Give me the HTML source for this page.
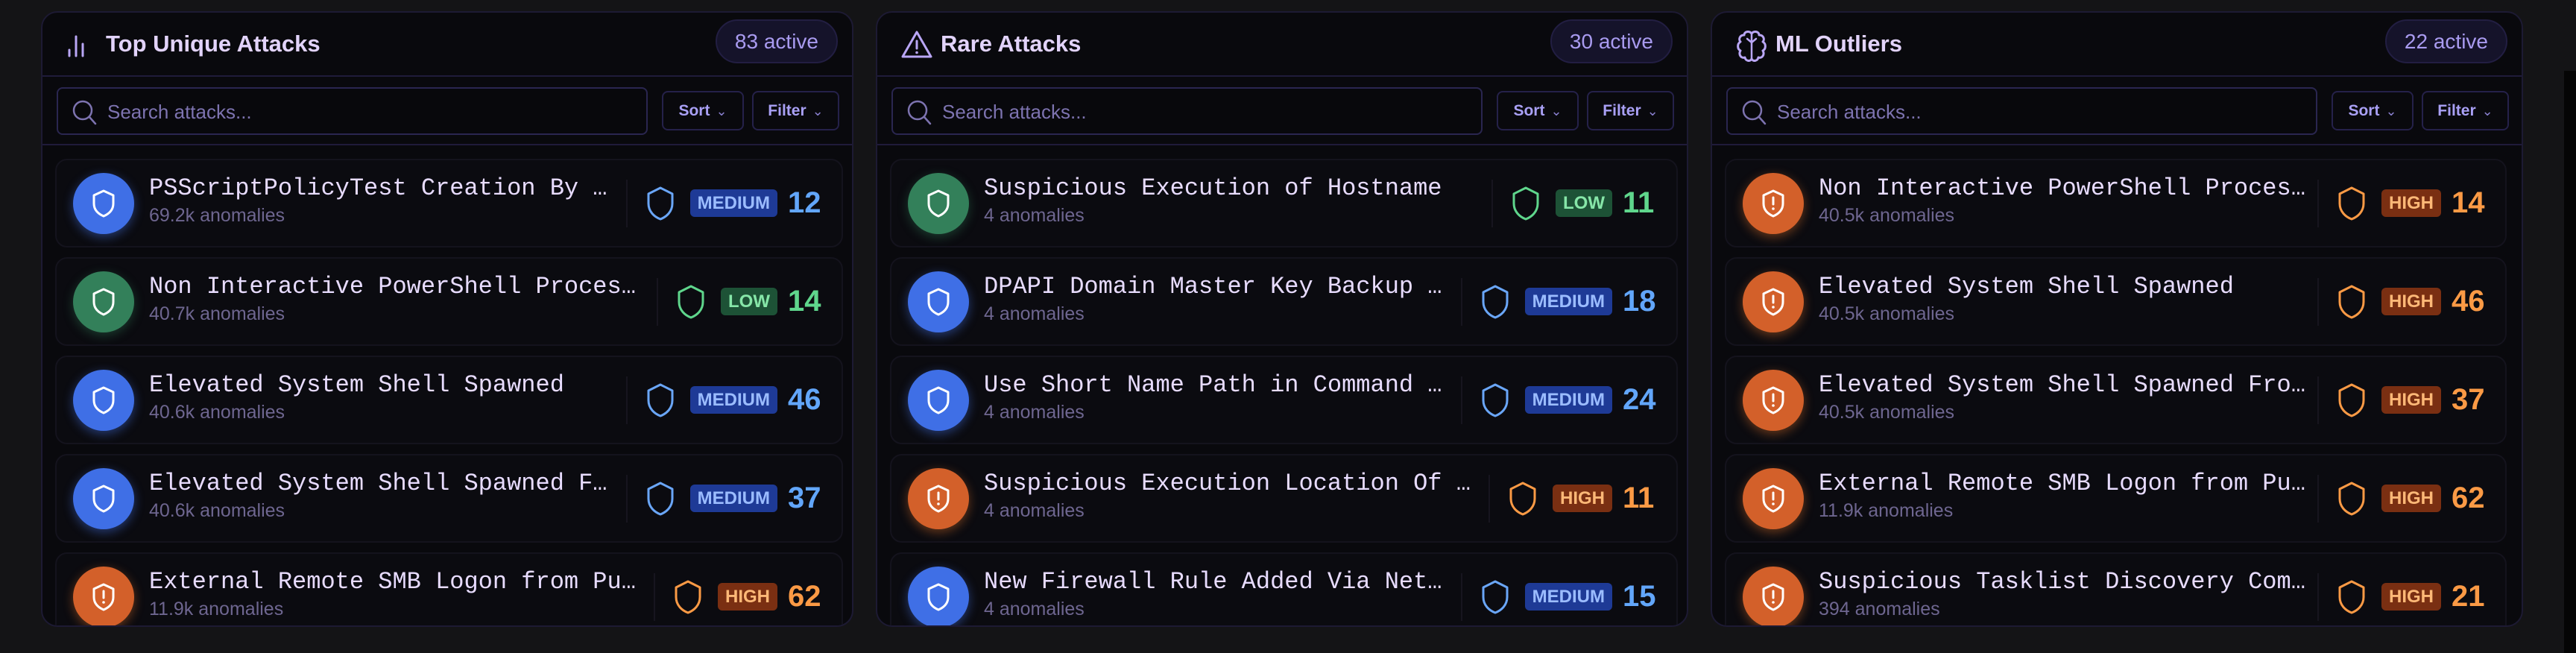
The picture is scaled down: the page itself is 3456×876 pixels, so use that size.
<!DOCTYPE html>
<html><head><meta charset="utf-8"><style>
*{box-sizing:border-box;margin:0;padding:0}
body{width:3456px;height:876px;background:#141416;overflow:hidden;position:relative;font-family:"Liberation Sans",sans-serif}
.sb{position:absolute;left:3440px;top:95px;width:16px;height:781px;background:#050505}
.panel{position:absolute;top:15px;width:1090px;height:826px;background:#09090d;border:2px solid #1d1a33;border-radius:22px;overflow:hidden}
.hdr{position:absolute;left:0;right:0;top:0;height:86px;border-bottom:2px solid #1f1b3a}
.hdr svg{position:absolute;left:30px;top:22px}
.hdr .t{position:absolute;left:85px;top:22px;font-size:31px;font-weight:bold;color:#e2d3fb;line-height:40px}
.act{position:absolute;right:19px;top:9px;height:59px;padding:0 24px;border-radius:30px;background:#15132a;border:2px solid #221e42;color:#a99bf0;font-size:28px;line-height:55px}
.srow{position:absolute;left:0;right:0;top:86px;height:92px;border-bottom:2px solid #1f1b3a}
.search{position:absolute;left:19px;top:14px;width:793px;height:64px;border:2px solid #2a2650;border-radius:8px;background:#08080c}
.search svg{position:absolute;left:18px;top:14px}
.search span{position:absolute;left:66px;top:14px;font-size:26px;color:#7d73b0;line-height:34px}
.btn{position:absolute;top:19px;height:53px;border:2px solid #25214a;border-radius:8px;color:#a9a0f5;font-size:21px;font-weight:bold;line-height:49px;text-align:center}
.btn i{font-style:normal;font-weight:normal;color:#8a80d0;font-size:18px;margin-left:8px}
.rows{position:absolute;left:17px;right:12px;top:196px}
.row{position:relative;height:119px;margin-bottom:13px;border:2px solid #14131d;border-radius:16px;background:#0b0b10;display:flex;align-items:center;padding-left:22px;padding-right:22px}
.c{width:82px;height:82px;border-radius:50%;flex:none;display:flex;align-items:center;justify-content:center}
.blue{background:#3f6fe6;box-shadow:0 4px 14px rgba(70,120,240,.45)}
.green{background:#33805a;box-shadow:0 4px 14px rgba(50,130,90,.4)}
.orange{background:#d3602a;box-shadow:0 4px 14px rgba(220,110,40,.45)}
.txt{flex:1;min-width:0;margin-left:20px;margin-right:16px}
.nm{font-family:"Liberation Mono",monospace;font-size:32px;color:#e8dcff;white-space:nowrap;overflow:hidden;text-overflow:ellipsis;line-height:38px;margin-top:-8px}
.an{font-size:25px;color:#6e6690;line-height:30px;margin-top:2px}
.rt{display:flex;align-items:center;flex:none;height:64px;border-left:2px solid #17151f;padding-left:24px}
.bd{height:37px;padding:0 10px;border-radius:6px;font-size:24px;font-weight:bold;line-height:37px;margin-left:20px}
.bd.m{background:#1e3a96;color:#9bbcff}
.bd.l{background:#1d5236;color:#86e6a8}
.bd.h{background:#7a2f12;color:#fdb877}
.n{font-size:40px;font-weight:bold;margin-left:14px;width:50px}
.n.m{color:#62a6fa}.n.l{color:#5fd68c}.n.h{color:#fb9a45}
</style></head><body>
<div class="sb"></div>

<!-- Panel 1 -->
<div class="panel" style="left:55px">
 <div class="hdr">
  <svg width="40" height="40" viewBox="0 0 40 40"><g stroke="#b9a6f5" stroke-width="3" stroke-linecap="round"><line x1="6" y1="36" x2="6" y2="28"/><line x1="15" y1="36" x2="15" y2="10"/><line x1="24" y1="36" x2="24" y2="20"/></g></svg>
  <div class="t">Top Unique Attacks</div>
  <div class="act">83 active</div>
 </div>
 <div class="srow">
  <div class="search"><svg width="36" height="36" viewBox="0 0 36 36"><circle cx="15" cy="15" r="12" fill="none" stroke="#7d73b0" stroke-width="2.5"/><line x1="24" y1="24" x2="32" y2="33" stroke="#7d73b0" stroke-width="2.5" stroke-linecap="round"/></svg><span>Search attacks...</span></div>
  <div class="btn" style="left:831px;width:110px">Sort<i>⌄</i></div>
  <div class="btn" style="left:952px;width:117px">Filter<i>⌄</i></div>
 </div>
 <div class="rows">
  <div class="row"><div class="c blue"><svg width="34" height="40" viewBox="0 0 34 40"><path d="M17 3 L30 9 V20 C30 29 24 34 17 37 C10 34 4 29 4 20 V9 Z" fill="none" stroke="#fff" stroke-width="3" stroke-linejoin="round"/></svg></div><div class="txt"><div class="nm">PSScriptPolicyTest Creation By PowerShell</div><div class="an">69.2k anomalies</div></div><div class="rt"><svg width="40" height="48" viewBox="0 0 40 48"><path d="M20 3 L36 11 V24 C36 35 28 42 20 45 C12 42 4 35 4 24 V11 Z" fill="none" stroke="#6aa6f8" stroke-width="3" stroke-linejoin="round"/></svg><div class="bd m">MEDIUM</div><div class="n m">12</div></div></div>
  <div class="row"><div class="c green"><svg width="34" height="40" viewBox="0 0 34 40"><path d="M17 3 L30 9 V20 C30 29 24 34 17 37 C10 34 4 29 4 20 V9 Z" fill="none" stroke="#fff" stroke-width="3" stroke-linejoin="round"/></svg></div><div class="txt"><div class="nm">Non Interactive PowerShell Process Spawned</div><div class="an">40.7k anomalies</div></div><div class="rt"><svg width="40" height="48" viewBox="0 0 40 48"><path d="M20 3 L36 11 V24 C36 35 28 42 20 45 C12 42 4 35 4 24 V11 Z" fill="none" stroke="#5fd68c" stroke-width="3" stroke-linejoin="round"/></svg><div class="bd l">LOW</div><div class="n l">14</div></div></div>
  <div class="row"><div class="c blue"><svg width="34" height="40" viewBox="0 0 34 40"><path d="M17 3 L30 9 V20 C30 29 24 34 17 37 C10 34 4 29 4 20 V9 Z" fill="none" stroke="#fff" stroke-width="3" stroke-linejoin="round"/></svg></div><div class="txt"><div class="nm">Elevated System Shell Spawned</div><div class="an">40.6k anomalies</div></div><div class="rt"><svg width="40" height="48" viewBox="0 0 40 48"><path d="M20 3 L36 11 V24 C36 35 28 42 20 45 C12 42 4 35 4 24 V11 Z" fill="none" stroke="#6aa6f8" stroke-width="3" stroke-linejoin="round"/></svg><div class="bd m">MEDIUM</div><div class="n m">46</div></div></div>
  <div class="row"><div class="c blue"><svg width="34" height="40" viewBox="0 0 34 40"><path d="M17 3 L30 9 V20 C30 29 24 34 17 37 C10 34 4 29 4 20 V9 Z" fill="none" stroke="#fff" stroke-width="3" stroke-linejoin="round"/></svg></div><div class="txt"><div class="nm">Elevated System Shell Spawned From Uncommon Parent</div><div class="an">40.6k anomalies</div></div><div class="rt"><svg width="40" height="48" viewBox="0 0 40 48"><path d="M20 3 L36 11 V24 C36 35 28 42 20 45 C12 42 4 35 4 24 V11 Z" fill="none" stroke="#6aa6f8" stroke-width="3" stroke-linejoin="round"/></svg><div class="bd m">MEDIUM</div><div class="n m">37</div></div></div>
  <div class="row"><div class="c orange"><svg width="34" height="40" viewBox="0 0 34 40"><path d="M17 3 L30 9 V20 C30 29 24 34 17 37 C10 34 4 29 4 20 V9 Z" fill="none" stroke="#fff" stroke-width="3" stroke-linejoin="round"/><line x1="17" y1="12" x2="17" y2="21" stroke="#fff" stroke-width="3" stroke-linecap="round"/><circle cx="17" cy="27" r="1.8" fill="#fff"/></svg></div><div class="txt"><div class="nm">External Remote SMB Logon from Public IP</div><div class="an">11.9k anomalies</div></div><div class="rt"><svg width="40" height="48" viewBox="0 0 40 48"><path d="M20 3 L36 11 V24 C36 35 28 42 20 45 C12 42 4 35 4 24 V11 Z" fill="none" stroke="#fb9a45" stroke-width="3" stroke-linejoin="round"/></svg><div class="bd h">HIGH</div><div class="n h">62</div></div></div>
 </div>
</div>

<!-- Panel 2 -->
<div class="panel" style="left:1175px">
 <div class="hdr">
  <svg width="46" height="42" viewBox="0 0 46 42"><path d="M23 4 L42 37 H4 Z" fill="none" stroke="#b9a6f5" stroke-width="3" stroke-linejoin="round"/><line x1="23" y1="16" x2="23" y2="26" stroke="#b9a6f5" stroke-width="3" stroke-linecap="round"/><circle cx="23" cy="31.5" r="1.8" fill="#b9a6f5"/></svg>
  <div class="t">Rare Attacks</div>
  <div class="act">30 active</div>
 </div>
 <div class="srow">
  <div class="search"><svg width="36" height="36" viewBox="0 0 36 36"><circle cx="15" cy="15" r="12" fill="none" stroke="#7d73b0" stroke-width="2.5"/><line x1="24" y1="24" x2="32" y2="33" stroke="#7d73b0" stroke-width="2.5" stroke-linecap="round"/></svg><span>Search attacks...</span></div>
  <div class="btn" style="left:831px;width:110px">Sort<i>⌄</i></div>
  <div class="btn" style="left:952px;width:117px">Filter<i>⌄</i></div>
 </div>
 <div class="rows">
  <div class="row"><div class="c green"><svg width="34" height="40" viewBox="0 0 34 40"><path d="M17 3 L30 9 V20 C30 29 24 34 17 37 C10 34 4 29 4 20 V9 Z" fill="none" stroke="#fff" stroke-width="3" stroke-linejoin="round"/></svg></div><div class="txt"><div class="nm">Suspicious Execution of Hostname</div><div class="an">4 anomalies</div></div><div class="rt"><svg width="40" height="48" viewBox="0 0 40 48"><path d="M20 3 L36 11 V24 C36 35 28 42 20 45 C12 42 4 35 4 24 V11 Z" fill="none" stroke="#5fd68c" stroke-width="3" stroke-linejoin="round"/></svg><div class="bd l">LOW</div><div class="n l">11</div></div></div>
  <div class="row"><div class="c blue"><svg width="34" height="40" viewBox="0 0 34 40"><path d="M17 3 L30 9 V20 C30 29 24 34 17 37 C10 34 4 29 4 20 V9 Z" fill="none" stroke="#fff" stroke-width="3" stroke-linejoin="round"/></svg></div><div class="txt"><div class="nm">DPAPI Domain Master Key Backup Attempt</div><div class="an">4 anomalies</div></div><div class="rt"><svg width="40" height="48" viewBox="0 0 40 48"><path d="M20 3 L36 11 V24 C36 35 28 42 20 45 C12 42 4 35 4 24 V11 Z" fill="none" stroke="#6aa6f8" stroke-width="3" stroke-linejoin="round"/></svg><div class="bd m">MEDIUM</div><div class="n m">18</div></div></div>
  <div class="row"><div class="c blue"><svg width="34" height="40" viewBox="0 0 34 40"><path d="M17 3 L30 9 V20 C30 29 24 34 17 37 C10 34 4 29 4 20 V9 Z" fill="none" stroke="#fff" stroke-width="3" stroke-linejoin="round"/></svg></div><div class="txt"><div class="nm">Use Short Name Path in Command Line</div><div class="an">4 anomalies</div></div><div class="rt"><svg width="40" height="48" viewBox="0 0 40 48"><path d="M20 3 L36 11 V24 C36 35 28 42 20 45 C12 42 4 35 4 24 V11 Z" fill="none" stroke="#6aa6f8" stroke-width="3" stroke-linejoin="round"/></svg><div class="bd m">MEDIUM</div><div class="n m">24</div></div></div>
  <div class="row"><div class="c orange"><svg width="34" height="40" viewBox="0 0 34 40"><path d="M17 3 L30 9 V20 C30 29 24 34 17 37 C10 34 4 29 4 20 V9 Z" fill="none" stroke="#fff" stroke-width="3" stroke-linejoin="round"/><line x1="17" y1="12" x2="17" y2="21" stroke="#fff" stroke-width="3" stroke-linecap="round"/><circle cx="17" cy="27" r="1.8" fill="#fff"/></svg></div><div class="txt"><div class="nm">Suspicious Execution Location Of Wermgr</div><div class="an">4 anomalies</div></div><div class="rt"><svg width="40" height="48" viewBox="0 0 40 48"><path d="M20 3 L36 11 V24 C36 35 28 42 20 45 C12 42 4 35 4 24 V11 Z" fill="none" stroke="#fb9a45" stroke-width="3" stroke-linejoin="round"/></svg><div class="bd h">HIGH</div><div class="n h">11</div></div></div>
  <div class="row"><div class="c blue"><svg width="34" height="40" viewBox="0 0 34 40"><path d="M17 3 L30 9 V20 C30 29 24 34 17 37 C10 34 4 29 4 20 V9 Z" fill="none" stroke="#fff" stroke-width="3" stroke-linejoin="round"/></svg></div><div class="txt"><div class="nm">New Firewall Rule Added Via Netsh</div><div class="an">4 anomalies</div></div><div class="rt"><svg width="40" height="48" viewBox="0 0 40 48"><path d="M20 3 L36 11 V24 C36 35 28 42 20 45 C12 42 4 35 4 24 V11 Z" fill="none" stroke="#6aa6f8" stroke-width="3" stroke-linejoin="round"/></svg><div class="bd m">MEDIUM</div><div class="n m">15</div></div></div>
 </div>
</div>

<!-- Panel 3 -->
<div class="panel" style="left:2295px">
 <div class="hdr">
  <svg width="46" height="46" viewBox="0 0 46 46"><path d="M23 6 C20 2 13 3 13 8 C7 8 5 14 8 17 C3 20 4 27 8 29 C5 34 9 40 14 38 C15 43 21 44 23 40 C25 44 31 43 32 38 C37 40 41 34 38 29 C42 27 43 20 38 17 C41 14 39 8 33 8 C33 3 26 2 23 6 Z" fill="none" stroke="#b9a6f5" stroke-width="3" stroke-linejoin="round"/><path d="M23 6 V40 M23 18 L17 13 M23 18 L29 13" fill="none" stroke="#b9a6f5" stroke-width="2.5" stroke-linecap="round"/></svg>
  <div class="t">ML Outliers</div>
  <div class="act">22 active</div>
 </div>
 <div class="srow">
  <div class="search"><svg width="36" height="36" viewBox="0 0 36 36"><circle cx="15" cy="15" r="12" fill="none" stroke="#7d73b0" stroke-width="2.5"/><line x1="24" y1="24" x2="32" y2="33" stroke="#7d73b0" stroke-width="2.5" stroke-linecap="round"/></svg><span>Search attacks...</span></div>
  <div class="btn" style="left:831px;width:110px">Sort<i>⌄</i></div>
  <div class="btn" style="left:952px;width:117px">Filter<i>⌄</i></div>
 </div>
 <div class="rows" style="right:20px">
  <div class="row"><div class="c orange"><svg width="34" height="40" viewBox="0 0 34 40"><path d="M17 3 L30 9 V20 C30 29 24 34 17 37 C10 34 4 29 4 20 V9 Z" fill="none" stroke="#fff" stroke-width="3" stroke-linejoin="round"/><line x1="17" y1="12" x2="17" y2="21" stroke="#fff" stroke-width="3" stroke-linecap="round"/><circle cx="17" cy="27" r="1.8" fill="#fff"/></svg></div><div class="txt"><div class="nm">Non Interactive PowerShell Process Spawned</div><div class="an">40.5k anomalies</div></div><div class="rt"><svg width="40" height="48" viewBox="0 0 40 48"><path d="M20 3 L36 11 V24 C36 35 28 42 20 45 C12 42 4 35 4 24 V11 Z" fill="none" stroke="#fb9a45" stroke-width="3" stroke-linejoin="round"/></svg><div class="bd h">HIGH</div><div class="n h">14</div></div></div>
  <div class="row"><div class="c orange"><svg width="34" height="40" viewBox="0 0 34 40"><path d="M17 3 L30 9 V20 C30 29 24 34 17 37 C10 34 4 29 4 20 V9 Z" fill="none" stroke="#fff" stroke-width="3" stroke-linejoin="round"/><line x1="17" y1="12" x2="17" y2="21" stroke="#fff" stroke-width="3" stroke-linecap="round"/><circle cx="17" cy="27" r="1.8" fill="#fff"/></svg></div><div class="txt"><div class="nm">Elevated System Shell Spawned</div><div class="an">40.5k anomalies</div></div><div class="rt"><svg width="40" height="48" viewBox="0 0 40 48"><path d="M20 3 L36 11 V24 C36 35 28 42 20 45 C12 42 4 35 4 24 V11 Z" fill="none" stroke="#fb9a45" stroke-width="3" stroke-linejoin="round"/></svg><div class="bd h">HIGH</div><div class="n h">46</div></div></div>
  <div class="row"><div class="c orange"><svg width="34" height="40" viewBox="0 0 34 40"><path d="M17 3 L30 9 V20 C30 29 24 34 17 37 C10 34 4 29 4 20 V9 Z" fill="none" stroke="#fff" stroke-width="3" stroke-linejoin="round"/><line x1="17" y1="12" x2="17" y2="21" stroke="#fff" stroke-width="3" stroke-linecap="round"/><circle cx="17" cy="27" r="1.8" fill="#fff"/></svg></div><div class="txt"><div class="nm">Elevated System Shell Spawned From Uncommon Parent</div><div class="an">40.5k anomalies</div></div><div class="rt"><svg width="40" height="48" viewBox="0 0 40 48"><path d="M20 3 L36 11 V24 C36 35 28 42 20 45 C12 42 4 35 4 24 V11 Z" fill="none" stroke="#fb9a45" stroke-width="3" stroke-linejoin="round"/></svg><div class="bd h">HIGH</div><div class="n h">37</div></div></div>
  <div class="row"><div class="c orange"><svg width="34" height="40" viewBox="0 0 34 40"><path d="M17 3 L30 9 V20 C30 29 24 34 17 37 C10 34 4 29 4 20 V9 Z" fill="none" stroke="#fff" stroke-width="3" stroke-linejoin="round"/><line x1="17" y1="12" x2="17" y2="21" stroke="#fff" stroke-width="3" stroke-linecap="round"/><circle cx="17" cy="27" r="1.8" fill="#fff"/></svg></div><div class="txt"><div class="nm">External Remote SMB Logon from Public IP</div><div class="an">11.9k anomalies</div></div><div class="rt"><svg width="40" height="48" viewBox="0 0 40 48"><path d="M20 3 L36 11 V24 C36 35 28 42 20 45 C12 42 4 35 4 24 V11 Z" fill="none" stroke="#fb9a45" stroke-width="3" stroke-linejoin="round"/></svg><div class="bd h">HIGH</div><div class="n h">62</div></div></div>
  <div class="row"><div class="c orange"><svg width="34" height="40" viewBox="0 0 34 40"><path d="M17 3 L30 9 V20 C30 29 24 34 17 37 C10 34 4 29 4 20 V9 Z" fill="none" stroke="#fff" stroke-width="3" stroke-linejoin="round"/><line x1="17" y1="12" x2="17" y2="21" stroke="#fff" stroke-width="3" stroke-linecap="round"/><circle cx="17" cy="27" r="1.8" fill="#fff"/></svg></div><div class="txt"><div class="nm">Suspicious Tasklist Discovery Command</div><div class="an">394 anomalies</div></div><div class="rt"><svg width="40" height="48" viewBox="0 0 40 48"><path d="M20 3 L36 11 V24 C36 35 28 42 20 45 C12 42 4 35 4 24 V11 Z" fill="none" stroke="#fb9a45" stroke-width="3" stroke-linejoin="round"/></svg><div class="bd h">HIGH</div><div class="n h">21</div></div></div>
 </div>
</div>
</body></html>
